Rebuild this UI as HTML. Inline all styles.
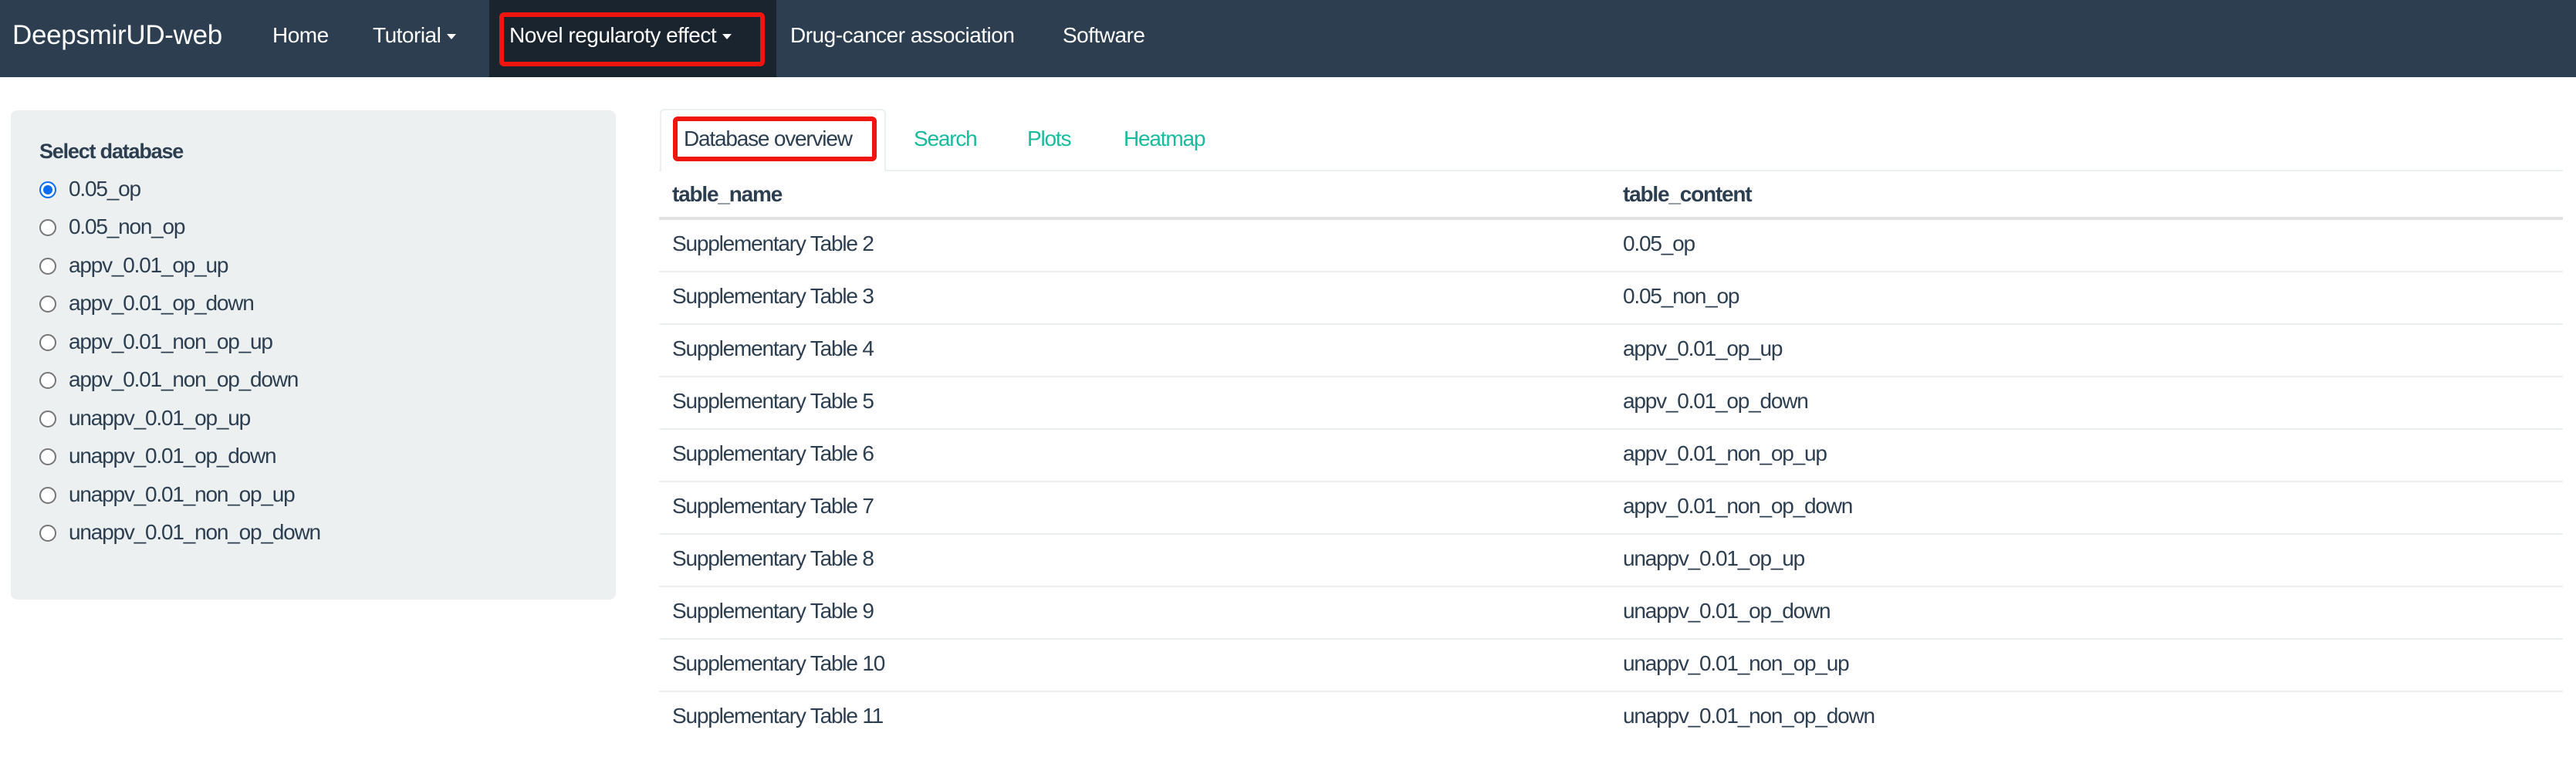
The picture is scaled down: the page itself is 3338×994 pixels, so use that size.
<!DOCTYPE html>
<html><head><meta charset="utf-8"><style>
*{margin:0;padding:0;box-sizing:border-box}
body{width:3338px;height:994px;background:#fff;font-family:"Liberation Sans",sans-serif;color:#2c3e50;position:relative;overflow:hidden}
.a{position:absolute;white-space:nowrap}
.nav{position:absolute;left:0;top:0;width:3338px;height:100px;background:#2c3e50}
.nl{position:absolute;color:#fff;font-size:28px;top:46px;transform:translateY(-50%);letter-spacing:-0.5px}
.car{display:inline-block;width:0;height:0;border-left:6px solid transparent;border-right:6px solid transparent;border-top:7px solid #fff;vertical-align:middle;margin-left:8px}
.well{position:absolute;left:14px;top:143px;width:784px;height:634px;background:#ecf0f1;border-radius:8px}
.t{font-size:28px;letter-spacing:-1.2px}
.rad{position:absolute;width:22px;height:22px;border-radius:50%;border:2px solid #767676;background:#fff}
.row{position:absolute;left:854px;width:2467px;border-top:2px solid #ecf0f1}
</style></head><body>
<div class="nav"></div>
<div style="position:absolute;left:634px;top:0;width:372px;height:100px;background:#1a242f"></div>
<div style="position:absolute;left:647px;top:16px;width:344px;height:70px;border:6px solid #f0150f;border-radius:6px"></div>
<div class="nl" style="left:16px;font-size:35px;letter-spacing:-0.3px">DeepsmirUD-web</div>
<div class="nl" style="left:353px">Home</div>
<div class="nl" style="left:483px">Tutorial<span class="car"></span></div>
<div class="nl" style="left:660px">Novel regularoty effect<span class="car"></span></div>
<div class="nl" style="left:1024px">Drug-cancer association</div>
<div class="nl" style="left:1377px">Software</div>

<div class="well"></div>
<div class="a t" style="left:51px;top:181px;font-weight:bold;font-size:27px">Select database</div>
<div class="rad" style="left:51px;top:235px;border:2px solid #0a6cf5"><div style="position:absolute;left:3px;top:3px;width:12px;height:12px;border-radius:50%;background:#0a6cf5"></div></div>
<div class="rad" style="left:51px;top:284px"></div>
<div class="rad" style="left:51px;top:334px"></div>
<div class="rad" style="left:51px;top:383px"></div>
<div class="rad" style="left:51px;top:433px"></div>
<div class="rad" style="left:51px;top:482px"></div>
<div class="rad" style="left:51px;top:532px"></div>
<div class="rad" style="left:51px;top:581px"></div>
<div class="rad" style="left:51px;top:631px"></div>
<div class="rad" style="left:51px;top:680px"></div>
<div class="a t" style="left:89px;top:229px">0.05_op</div>
<div class="a t" style="left:89px;top:278px">0.05_non_op</div>
<div class="a t" style="left:89px;top:328px">appv_0.01_op_up</div>
<div class="a t" style="left:89px;top:377px">appv_0.01_op_down</div>
<div class="a t" style="left:89px;top:427px">appv_0.01_non_op_up</div>
<div class="a t" style="left:89px;top:476px">appv_0.01_non_op_down</div>
<div class="a t" style="left:89px;top:526px">unappv_0.01_op_up</div>
<div class="a t" style="left:89px;top:575px">unappv_0.01_op_down</div>
<div class="a t" style="left:89px;top:625px">unappv_0.01_non_op_up</div>
<div class="a t" style="left:89px;top:674px">unappv_0.01_non_op_down</div>

<div style="position:absolute;left:854px;top:220px;width:2467px;height:2px;background:#ecf0f1"></div>
<div style="position:absolute;left:855px;top:141px;width:293px;height:81px;border:2px solid #ecf0f1;border-bottom:none;border-radius:6px 6px 0 0;background:#fff"></div>
<div style="position:absolute;left:872px;top:151px;width:264px;height:58px;border:6px solid #f0150f;border-radius:6px"></div>
<div class="a t" style="left:886px;top:164px">Database overview</div>
<div class="a t" style="left:1184px;top:164px;color:#18bc9c">Search</div>
<div class="a t" style="left:1331px;top:164px;color:#18bc9c">Plots</div>
<div class="a t" style="left:1456px;top:164px;color:#18bc9c">Heatmap</div>

<div class="a t" style="left:871px;top:236px;font-weight:bold">table_name</div>
<div class="a t" style="left:2103px;top:236px;font-weight:bold">table_content</div>
<div style="position:absolute;left:854px;top:281px;width:2467px;height:4px;background:#e2e2e2"></div>

<div class="row" style="top:351px"></div><div class="row" style="top:419px"></div><div class="row" style="top:487px"></div><div class="row" style="top:555px"></div><div class="row" style="top:623px"></div><div class="row" style="top:691px"></div><div class="row" style="top:759px"></div><div class="row" style="top:827px"></div><div class="row" style="top:895px"></div>

<div class="a t" style="left:871px;top:300px">Supplementary Table 2</div><div class="a t" style="left:2103px;top:300px">0.05_op</div>
<div class="a t" style="left:871px;top:368px">Supplementary Table 3</div><div class="a t" style="left:2103px;top:368px">0.05_non_op</div>
<div class="a t" style="left:871px;top:436px">Supplementary Table 4</div><div class="a t" style="left:2103px;top:436px">appv_0.01_op_up</div>
<div class="a t" style="left:871px;top:504px">Supplementary Table 5</div><div class="a t" style="left:2103px;top:504px">appv_0.01_op_down</div>
<div class="a t" style="left:871px;top:572px">Supplementary Table 6</div><div class="a t" style="left:2103px;top:572px">appv_0.01_non_op_up</div>
<div class="a t" style="left:871px;top:640px">Supplementary Table 7</div><div class="a t" style="left:2103px;top:640px">appv_0.01_non_op_down</div>
<div class="a t" style="left:871px;top:708px">Supplementary Table 8</div><div class="a t" style="left:2103px;top:708px">unappv_0.01_op_up</div>
<div class="a t" style="left:871px;top:776px">Supplementary Table 9</div><div class="a t" style="left:2103px;top:776px">unappv_0.01_op_down</div>
<div class="a t" style="left:871px;top:844px">Supplementary Table 10</div><div class="a t" style="left:2103px;top:844px">unappv_0.01_non_op_up</div>
<div class="a t" style="left:871px;top:912px">Supplementary Table 11</div><div class="a t" style="left:2103px;top:912px">unappv_0.01_non_op_down</div>
</body></html>
